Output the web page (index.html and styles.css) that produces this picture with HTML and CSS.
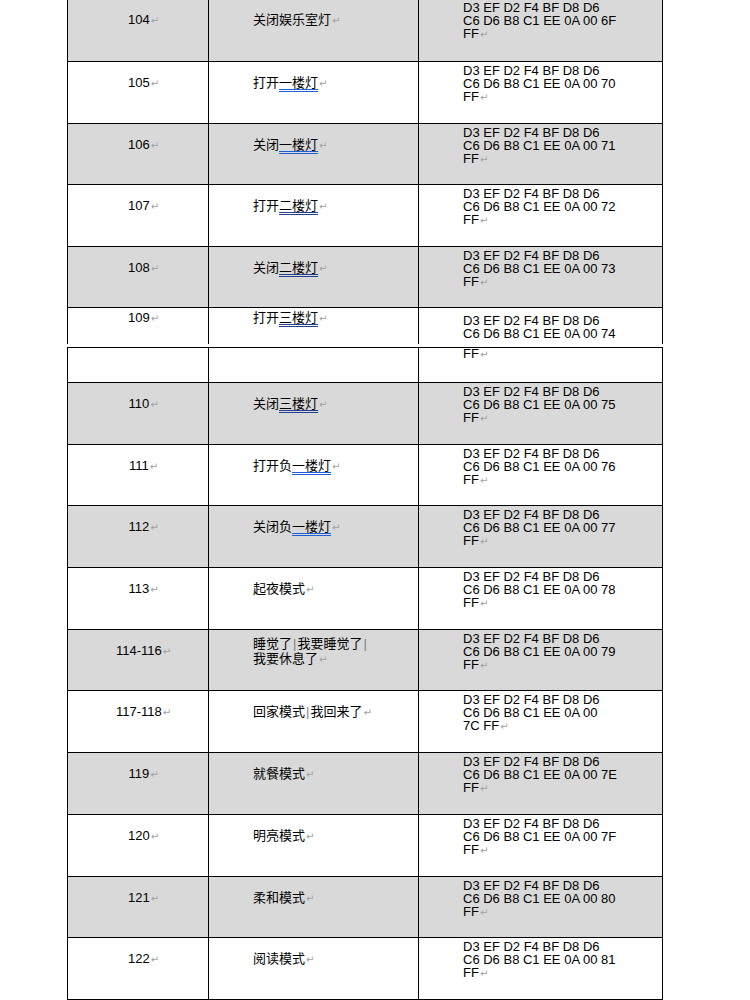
FILE: index.html
```html
<!DOCTYPE html>
<html lang="zh-CN">
<head>
<meta charset="utf-8">
<title>指令表</title>
<link rel="stylesheet" href="styles.css">
</head>
<body>
<div class="page">
  <div class="seg seg1">
    <div class="row gray first">
      <div class="c num">104<span class="pm">↵</span></div>
      <div class="c name">关闭娱乐室灯<span class="pm">↵</span></div>
      <div class="c hex">D3 EF D2 F4 BF D8 D6<br>C6 D6 B8 C1 EE 0A 00 6F<br>FF<span class="pm">↵</span></div>
    </div>
    <div class="row h62">
      <div class="c num">105<span class="pm">↵</span></div>
      <div class="c name">打开<span class="u">一楼灯</span><span class="pm">↵</span></div>
      <div class="c hex">D3 EF D2 F4 BF D8 D6<br>C6 D6 B8 C1 EE 0A 00 70<br>FF<span class="pm">↵</span></div>
    </div>
    <div class="row gray h61">
      <div class="c num">106<span class="pm">↵</span></div>
      <div class="c name">关闭<span class="u">一楼灯</span><span class="pm">↵</span></div>
      <div class="c hex">D3 EF D2 F4 BF D8 D6<br>C6 D6 B8 C1 EE 0A 00 71<br>FF<span class="pm">↵</span></div>
    </div>
    <div class="row h62">
      <div class="c num">107<span class="pm">↵</span></div>
      <div class="c name">打开<span class="u dark">二楼灯</span><span class="pm">↵</span></div>
      <div class="c hex">D3 EF D2 F4 BF D8 D6<br>C6 D6 B8 C1 EE 0A 00 72<br>FF<span class="pm">↵</span></div>
    </div>
    <div class="row gray h61">
      <div class="c num">108<span class="pm">↵</span></div>
      <div class="c name">关闭<span class="u dark">二楼灯</span><span class="pm">↵</span></div>
      <div class="c hex">D3 EF D2 F4 BF D8 D6<br>C6 D6 B8 C1 EE 0A 00 73<br>FF<span class="pm">↵</span></div>
    </div>
    <div class="row split">
      <div class="c num">109<span class="pm">↵</span></div>
      <div class="c name">打开<span class="u dark">三楼灯</span><span class="pm">↵</span></div>
      <div class="c hex">D3 EF D2 F4 BF D8 D6<br>C6 D6 B8 C1 EE 0A 00 74</div>
    </div>
  </div>

  <div class="seg seg2">
    <div class="row cont">
      <div class="c num"></div>
      <div class="c name"></div>
      <div class="c hex"><div class="tail">FF<span class="pm">↵</span></div></div>
    </div>
    <div class="row gray h62">
      <div class="c num">110<span class="pm">↵</span></div>
      <div class="c name">关闭<span class="u dark">三楼灯</span><span class="pm">↵</span></div>
      <div class="c hex">D3 EF D2 F4 BF D8 D6<br>C6 D6 B8 C1 EE 0A 00 75<br>FF<span class="pm">↵</span></div>
    </div>
    <div class="row h61">
      <div class="c num">111<span class="pm">↵</span></div>
      <div class="c name">打开负<span class="u">一楼灯</span><span class="pm">↵</span></div>
      <div class="c hex">D3 EF D2 F4 BF D8 D6<br>C6 D6 B8 C1 EE 0A 00 76<br>FF<span class="pm">↵</span></div>
    </div>
    <div class="row gray h62">
      <div class="c num">112<span class="pm">↵</span></div>
      <div class="c name">关闭负<span class="u">一楼灯</span><span class="pm">↵</span></div>
      <div class="c hex">D3 EF D2 F4 BF D8 D6<br>C6 D6 B8 C1 EE 0A 00 77<br>FF<span class="pm">↵</span></div>
    </div>
    <div class="row h62">
      <div class="c num">113<span class="pm">↵</span></div>
      <div class="c name">起夜模式<span class="pm">↵</span></div>
      <div class="c hex">D3 EF D2 F4 BF D8 D6<br>C6 D6 B8 C1 EE 0A 00 78<br>FF<span class="pm">↵</span></div>
    </div>
    <div class="row gray h61">
      <div class="c num">114-116<span class="pm">↵</span></div>
      <div class="c name two">睡觉了<span class="bar">|</span>我要睡觉了<span class="bar">|</span><br>我要休息了<span class="pm">↵</span></div>
      <div class="c hex">D3 EF D2 F4 BF D8 D6<br>C6 D6 B8 C1 EE 0A 00 79<br>FF<span class="pm">↵</span></div>
    </div>
    <div class="row h62">
      <div class="c num">117-118<span class="pm">↵</span></div>
      <div class="c name">回家模式<span class="bar">|</span>我回来了<span class="pm">↵</span></div>
      <div class="c hex">D3 EF D2 F4 BF D8 D6<br>C6 D6 B8 C1 EE 0A 00<br>7C FF<span class="pm">↵</span></div>
    </div>
    <div class="row gray h62">
      <div class="c num">119<span class="pm">↵</span></div>
      <div class="c name">就餐模式<span class="pm">↵</span></div>
      <div class="c hex">D3 EF D2 F4 BF D8 D6<br>C6 D6 B8 C1 EE 0A 00 7E<br>FF<span class="pm">↵</span></div>
    </div>
    <div class="row h62">
      <div class="c num">120<span class="pm">↵</span></div>
      <div class="c name">明亮模式<span class="pm">↵</span></div>
      <div class="c hex">D3 EF D2 F4 BF D8 D6<br>C6 D6 B8 C1 EE 0A 00 7F<br>FF<span class="pm">↵</span></div>
    </div>
    <div class="row gray h61">
      <div class="c num">121<span class="pm">↵</span></div>
      <div class="c name">柔和模式<span class="pm">↵</span></div>
      <div class="c hex">D3 EF D2 F4 BF D8 D6<br>C6 D6 B8 C1 EE 0A 00 80<br>FF<span class="pm">↵</span></div>
    </div>
    <div class="row h62">
      <div class="c num">122<span class="pm">↵</span></div>
      <div class="c name">阅读模式<span class="pm">↵</span></div>
      <div class="c hex">D3 EF D2 F4 BF D8 D6<br>C6 D6 B8 C1 EE 0A 00 81<br>FF<span class="pm">↵</span></div>
    </div>
  </div>
</div>
</body>
</html>
```

FILE: styles.css
```css
html, body {
  margin: 0;
  padding: 0;
  background: #ffffff;
  color: #000000;
}

.page {
  padding-left: 67px;
}

.seg {
  width: 596px;
  box-sizing: border-box;
  border-left: 1px solid #000;
}

.seg2 {
  margin-top: 3px;
  border-top: 1px solid #000;
}

.row {
  display: grid;
  grid-template-columns: 141px 210px 244px;
  box-sizing: border-box;
  border-bottom: 1px solid #000;
  background: #ffffff;
}

.row.gray {
  background: #d9d9d9;
}

.row.first {
  margin-top: -1px;
  height: 63px;
}

.row.h62 {
  height: 62px;
}

.row.h61 {
  height: 61px;
}

.row.split {
  height: 36px;
  border-bottom: none;
}

.row.cont {
  height: 35px;
}

.c {
  box-sizing: border-box;
  border-right: 1px solid #000;
  white-space: nowrap;
}

.num {
  font-family: "Liberation Sans", Arial, sans-serif;
  font-size: 13px;
  line-height: 13px;
  text-align: center;
  padding: 14px 0 0 11px;
}

.name {
  font-family: "Noto Sans CJK SC", "Liberation Sans", sans-serif;
  font-size: 13px;
  line-height: 14px;
  padding: 13px 0 0 44px;
}

.name.two {
  padding-top: 6px;
}

.hex {
  font-family: "Liberation Sans", Arial, sans-serif;
  font-size: 13px;
  line-height: 13px;
  padding: 2px 0 0 44px;
}

.first .num {
  padding-top: 14px;
}

.first .name {
  padding-top: 13px;
}

.split .num {
  padding-top: 3px;
}

.split .name {
  padding-top: 2px;
}

.split .hex {
  padding-top: 6px;
}

.cont .hex {
  padding-top: 0;
}

.tail {
  margin-top: -1px;
}

.pm {
  font-family: "DejaVu Sans", sans-serif;
  font-size: 10px;
  color: #a0a0a0;
  margin-left: 1px;
}

.u {
  text-decoration-line: underline;
  text-decoration-style: double;
  text-decoration-color: #1f5fd6;
  text-decoration-thickness: 1px;
  text-underline-offset: 2px;
}

.u.dark {
  text-decoration-color: #23408f;
}

.bar {
  font-family: "Liberation Sans", Arial, sans-serif;
  color: #7f7f7f;
  margin: 0 1px;
}
```
